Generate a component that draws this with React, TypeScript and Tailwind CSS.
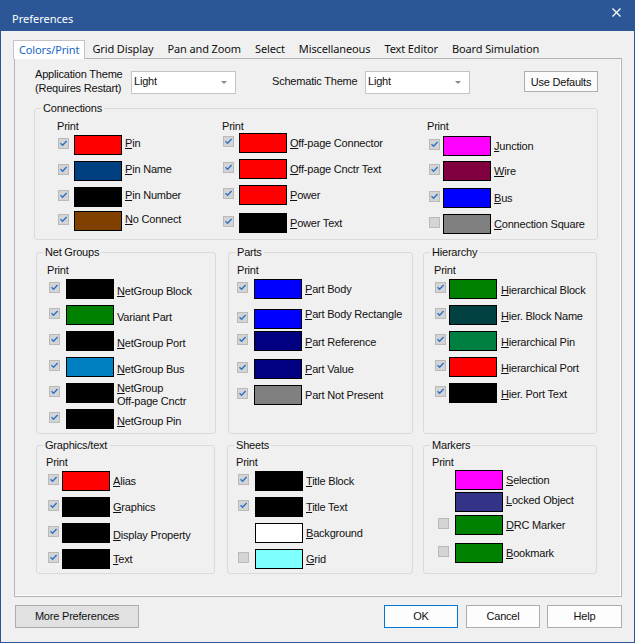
import type { ReactNode } from "react";

type Check = "on" | "off" | "none";

type Row = {
  label: string;
  label2?: string;
  u?: boolean;
  bg: string;
  c: Check;
  mt: string;
  lc?: string;
};

function Box({ c }: { c: Check }) {
  if (c === "none") return null;
  return (
    <span className="flex h-[11px] w-[11px] items-center justify-center border border-[#bababa] bg-[#d4d4d4]">
      {c === "on" && (
        <svg width="9" height="9" viewBox="0 0 9 9">
          <path d="M1.5 4.2 L3.6 6.3 L7.6 2" fill="none" stroke="#2a72c8" strokeWidth="1.4" />
        </svg>
      )}
    </span>
  );
}

function Label({ r }: { r: Row }) {
  const first = r.u === false ? (
    r.label
  ) : (
    <>
      <span className="underline underline-offset-[1px]">{r.label[0]}</span>
      {r.label.slice(1)}
    </>
  );
  return (
    <>
      {first}
      {r.label2 && (
        <>
          <br />
          {r.label2}
        </>
      )}
    </>
  );
}

function Column({
  className,
  cell,
  cb,
  lm = "ml-[3px]",
  lc = "",
  rows,
}: {
  className: string;
  cell: string;
  cb: string;
  lm?: string;
  lc?: string;
  rows: Row[];
}) {
  return (
    <div className={className}>
      <div className="h-[14px] leading-[14px]">Print</div>
      {rows.map((r) => (
        <div key={r.label} className={`flex h-[20px] items-center ${r.mt}`}>
          <div className={`flex h-full shrink-0 items-start pt-[3px] ${cell}`}>
            <span className={cb}>
              <Box c={r.c} />
            </span>
          </div>
          <div className={`h-[20px] w-[48px] shrink-0 border border-black ${r.bg}`} />
          <div className={`whitespace-nowrap leading-[13px] ${lm} ${lc} ${r.lc ?? ""}`}>
            <Label r={r} />
          </div>
        </div>
      ))}
    </div>
  );
}

function Group({ title, className, children }: { title: string; className: string; children: ReactNode }) {
  return (
    <div className={`relative shrink-0 rounded-[3px] border border-[#dadada] ${className}`}>
      <span className="absolute -top-[8px] left-[6px] bg-[#f0f0f0] px-[2px] leading-[14px]">{title}</span>
      {children}
    </div>
  );
}

function Combo({ className }: { className: string }) {
  return (
    <div
      className={`flex h-[23px] w-[105px] shrink-0 items-center justify-between border border-[#c4c4c4] bg-white pl-[2px] pr-[8px] ${className}`}
    >
      <span className="-mt-[2px]">Light</span>
      <svg width="6" height="4" viewBox="0 0 6 4">
        <path d="M0 0 H6 L3 3 Z" fill="#8a8a8a" />
      </svg>
    </div>
  );
}

const conn1: Row[] = [
  { label: "Pin", bg: "bg-[#ff0000]", c: "on", mt: "mt-[2px]" },
  { label: "Pin Name", bg: "bg-[#004080]", c: "on", mt: "mt-[6px]" },
  { label: "Pin Number", bg: "bg-[#000000]", c: "on", mt: "mt-[6px]" },
  { label: "No Connect", bg: "bg-[#804000]", c: "on", mt: "mt-[4px]" },
];

const conn2: Row[] = [
  { label: "Off-page Connector", bg: "bg-[#ff0000]", c: "on", mt: "mt-[0px]" },
  { label: "Off-page Cnctr Text", bg: "bg-[#ff0000]", c: "on", mt: "mt-[6px]" },
  { label: "Power", bg: "bg-[#ff0000]", c: "on", mt: "mt-[6px]" },
  { label: "Power Text", bg: "bg-[#000000]", c: "on", mt: "mt-[8px]" },
];

const conn3: Row[] = [
  { label: "Junction", bg: "bg-[#ff00ff]", c: "on", mt: "mt-[3px]", lc: "-ml-[2px]" },
  { label: "Wire", bg: "bg-[#800040]", c: "on", mt: "mt-[5px]" },
  { label: "Bus", bg: "bg-[#0000ff]", c: "on", mt: "mt-[7px]" },
  { label: "Connection Square", bg: "bg-[#808080]", c: "off", mt: "mt-[6px]", lc: "-ml-[2px]" },
];

const netGroups: Row[] = [
  { label: "NetGroup Block", bg: "bg-[#000000]", c: "on", mt: "mt-[2px]" },
  { label: "Variant Part", u: false, bg: "bg-[#008000]", c: "on", mt: "mt-[6px]" },
  { label: "NetGroup Port", bg: "bg-[#000000]", c: "on", mt: "mt-[6px]" },
  { label: "NetGroup Bus", bg: "bg-[#0080c0]", c: "on", mt: "mt-[6px]" },
  { label: "NetGroup", label2: "Off-page Cnctr", bg: "bg-[#000000]", c: "on", mt: "mt-[6px]" },
  { label: "NetGroup Pin", bg: "bg-[#000000]", c: "on", mt: "mt-[6px]" },
];

const parts: Row[] = [
  { label: "Part Body", bg: "bg-[#0000ff]", c: "on", mt: "mt-[2px]" },
  { label: "Part Body Rectangle", bg: "bg-[#0000ff]", c: "on", mt: "mt-[10px]", lc: "-mt-[10px]" },
  { label: "Part Reference", bg: "bg-[#000080]", c: "on", mt: "mt-[2px]", lc: "mt-[2px]" },
  { label: "Part Value", bg: "bg-[#000080]", c: "on", mt: "mt-[8px]" },
  { label: "Part Not Present", u: false, bg: "bg-[#808080]", c: "on", mt: "mt-[6px]" },
];

const hierarchy: Row[] = [
  { label: "Hierarchical Block", bg: "bg-[#008000]", c: "on", mt: "mt-[2px]" },
  { label: "Hier. Block Name", bg: "bg-[#004040]", c: "on", mt: "mt-[6px]" },
  { label: "Hierarchical Pin", bg: "bg-[#008040]", c: "on", mt: "mt-[6px]" },
  { label: "Hierarchical Port", bg: "bg-[#ff0000]", c: "on", mt: "mt-[6px]", lc: "-ml-[1px]" },
  { label: "Hier. Port Text", bg: "bg-[#000000]", c: "on", mt: "mt-[6px]", lc: "-ml-[1px]" },
];

const graphics: Row[] = [
  { label: "Alias", bg: "bg-[#ff0000]", c: "on", mt: "mt-[2px]" },
  { label: "Graphics", bg: "bg-[#000000]", c: "on", mt: "mt-[6px]" },
  { label: "Display Property", bg: "bg-[#000000]", c: "on", mt: "mt-[6px]", lc: "mt-[4px]" },
  { label: "Text", bg: "bg-[#000000]", c: "on", mt: "mt-[6px]" },
];

const sheets: Row[] = [
  { label: "Title Block", bg: "bg-[#000000]", c: "on", mt: "mt-[2px]" },
  { label: "Title Text", bg: "bg-[#000000]", c: "on", mt: "mt-[6px]" },
  { label: "Background", bg: "bg-[#ffffff]", c: "none", mt: "mt-[6px]" },
  { label: "Grid", bg: "bg-[#80ffff]", c: "off", mt: "mt-[6px]" },
];

const markers: Row[] = [
  { label: "Selection", bg: "bg-[#ff00ff]", c: "none", mt: "mt-[1px]" },
  { label: "Locked Object", bg: "bg-[#333388]", c: "none", mt: "mt-[2px]", lc: "-mt-[4px]" },
  { label: "DRC Marker", bg: "bg-[#008000]", c: "off", mt: "mt-[3px]" },
  { label: "Bookmark", bg: "bg-[#008000]", c: "off", mt: "mt-[8px]" },
];

const tabs = ["Grid Display", "Pan and Zoom", "Select", "Miscellaneous", "Text Editor", "Board Simulation"];

export default function App() {
  return (
    <div className="flex h-[643px] w-[635px] flex-col overflow-hidden bg-[#f0f0f0] font-['Liberation_Sans',Arial,sans-serif] text-[11px] tracking-[-0.2px] text-[#111]">
      <div className="flex h-[31px] shrink-0 items-start justify-between bg-[#2b5797] pl-[12px] pr-[14px] font-['Noto_Sans',sans-serif] tracking-normal text-white">
        <span className="pt-[11px] text-[11px] leading-[16px]">Preferences</span>
        <svg className="mt-[8px]" width="9" height="9" viewBox="0 0 9 9">
          <path d="M0.5 0.5 L8.5 8.5 M8.5 0.5 L0.5 8.5" stroke="#ffffff" strokeWidth="1.3" />
        </svg>
      </div>

      <div className="flex flex-1 flex-col border-x border-b border-[#2b5797] px-[12px]">
        <div className="mt-[9px] flex h-[18px] items-end font-['Noto_Sans',sans-serif] tracking-[-0.12px]">
          <div className="relative z-10 -mb-[1px] flex h-[19px] items-center border-x border-t border-[#c4c4c4] bg-white px-[5px] text-[#1667c4]">
            Colors/Print
          </div>
          {tabs.map((t) => (
            <div key={t} className="flex h-[18px] items-center px-[7px]">
              {t}
            </div>
          ))}
        </div>

        <div className="ml-[1px] flex h-[539px] w-[608px] flex-col border border-[#b4b4b4] shadow-[inset_-1px_-1px_0_#ffffff]">
          <div className="flex items-start pl-[20px] pt-[8px]">
            <div className="w-[96px] leading-[14px]">
              Application Theme
              <br />
              (Requires Restart)
            </div>
            <Combo className="mt-[4px]" />
            <div className="ml-[36px] mt-[7px] w-[93px] leading-[14px]">Schematic Theme</div>
            <Combo className="mt-[4px]" />
            <button className="ml-[54px] mt-[4px] h-[21px] w-[74px] border border-[#adadad] bg-[#fbfbfb] leading-[14px]">
              Use Defaults
            </button>
          </div>

          <Group title="Connections" className="ml-[19px] mt-[13px] h-[132px] w-[564px]">
            <div className="flex pl-[22px] pt-[10px]">
              <Column className="w-[165px]" cell="w-[17px]" cb="ml-[1px]" lc="-mt-[4px]" rows={conn1} />
              <Column className="w-[205px]" cell="w-[17px]" cb="ml-[1px]" rows={conn2} />
              <Column className="flex-1" cell="w-[16px]" cb="ml-[2px]" rows={conn3} />
            </div>
          </Group>

          <div className="ml-[21px] mt-[12px] flex h-[182px]">
            <Group title="Net Groups" className="h-full w-[180px]">
              <Column className="pl-[10px] pt-[10px]" cell="w-[19px]" cb="ml-[2px]" lc="mt-[4px]" rows={netGroups} />
            </Group>
            <Group title="Parts" className="ml-[12px] h-full w-[185px]">
              <Column className="pl-[8px] pt-[10px]" cell="w-[17px]" cb="ml-[0px]" rows={parts} />
            </Group>
            <Group title="Hierarchy" className="ml-[10px] h-full w-[174px]">
              <Column className="pl-[10px] pt-[10px]" cell="w-[15px]" cb="ml-[1px]" lm="ml-[4px]" lc="mt-[2px]" rows={hierarchy} />
            </Group>
          </div>

          <div className="ml-[21px] mt-[11px] flex h-[129px]">
            <Group title="Graphics/text" className="h-full w-[179px]">
              <Column className="pl-[9px] pt-[9px]" cell="w-[16px]" cb="ml-[2px]" rows={graphics} />
            </Group>
            <Group title="Sheets" className="ml-[12px] h-full w-[186px]">
              <Column className="pl-[8px] pt-[9px]" cell="w-[19px]" cb="ml-[2px]" rows={sheets} />
            </Group>
            <Group title="Markers" className="ml-[10px] h-full w-[174px]">
              <Column className="pl-[8px] pt-[9px]" cell="w-[23px]" cb="ml-[6px]" rows={markers} />
            </Group>
          </div>
        </div>

        <div className="mt-[8px] flex h-[23px] shrink-0">
          <button className="ml-[2px] h-full w-[124px] border border-[#adadad] bg-[#e1e1e1]">More Preferences</button>
          <button className="ml-auto h-full w-[74px] border border-[#0078d7] bg-[#fdfdfd]">OK</button>
          <button className="ml-[8px] h-full w-[74px] border border-[#adadad] bg-[#fdfdfd]">Cancel</button>
          <button className="ml-[7px] h-full w-[75px] border border-[#adadad] bg-[#fdfdfd]">Help</button>
        </div>
      </div>
    </div>
  );
}
